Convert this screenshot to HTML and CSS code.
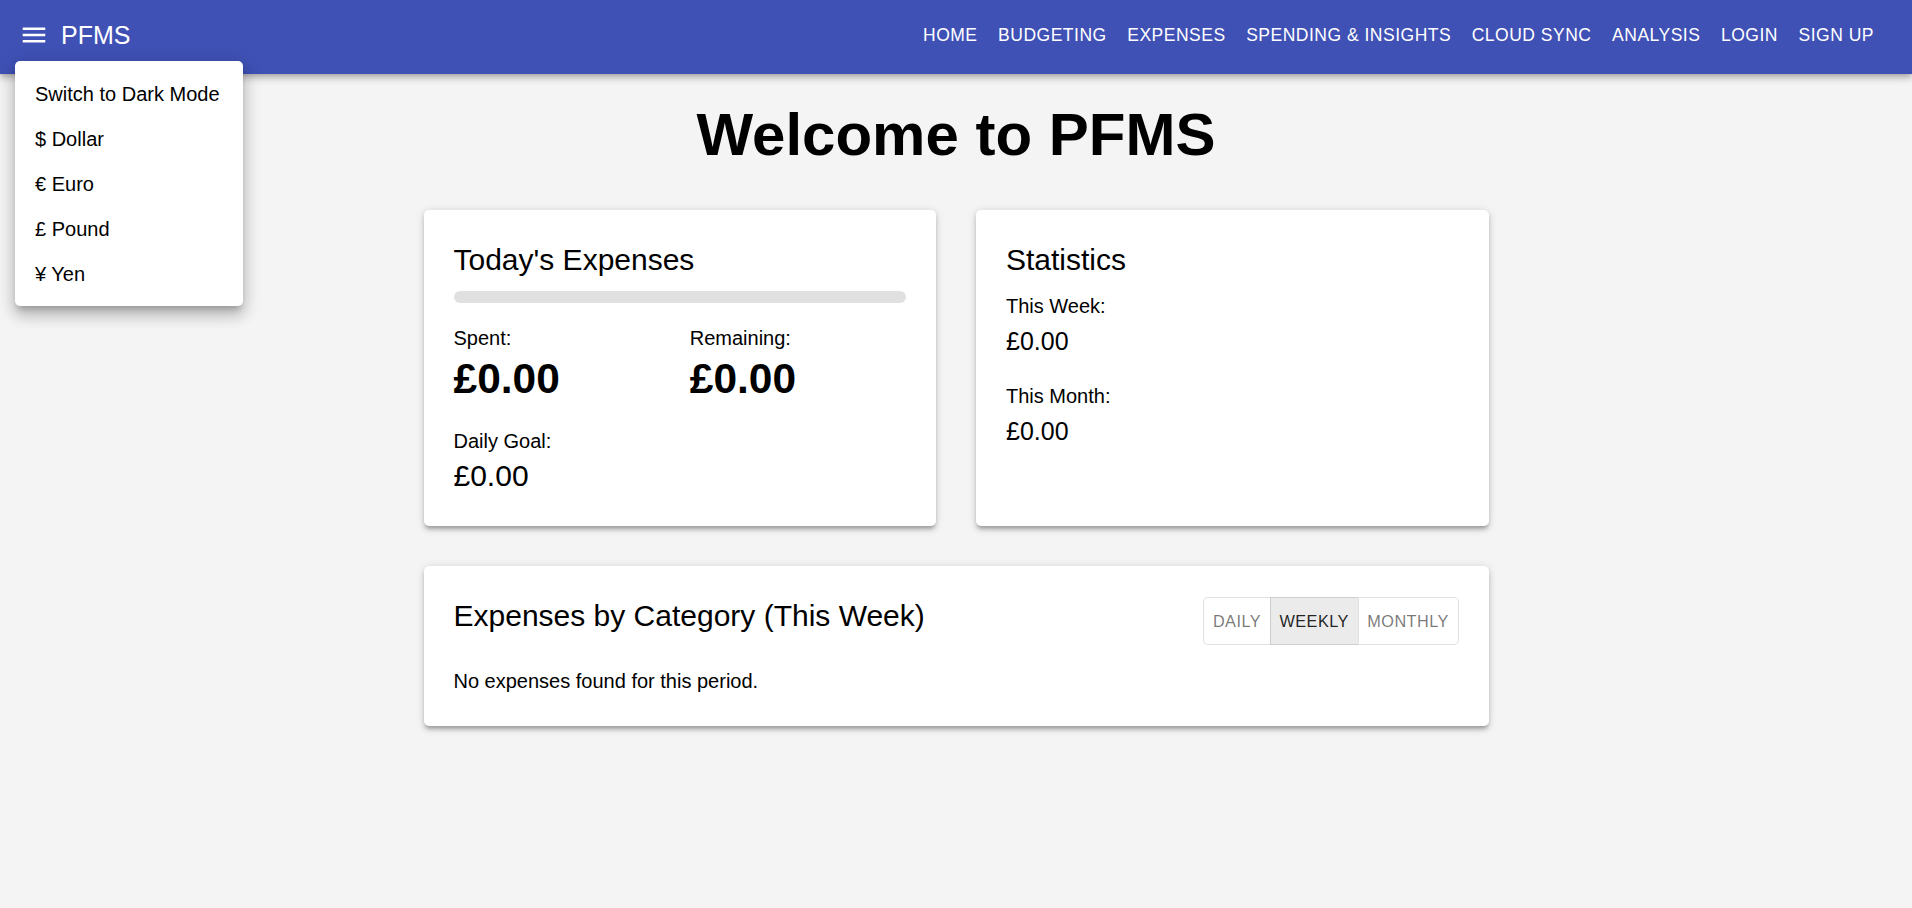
FILE: index.html
```html
<!DOCTYPE html>
<html lang="en">
<head>
<meta charset="utf-8">
<title>PFMS</title>
<link rel="stylesheet" href="styles.css">
</head>
<body>
<header class="appbar">
  <button class="menu-btn" aria-label="menu">
    <svg viewBox="0 0 24 24" width="30" height="30"><path fill="#fff" d="M3 18h18v-2H3v2zm0-5h18v-2H3v2zm0-7v2h18V6H3z"/></svg>
  </button>
  <div class="brand">PFMS</div>
  <nav class="nav">
    <a class="nav-btn">Home</a>
    <a class="nav-btn">Budgeting</a>
    <a class="nav-btn">Expenses</a>
    <a class="nav-btn">Spending &amp; Insights</a>
    <a class="nav-btn">Cloud Sync</a>
    <a class="nav-btn">Analysis</a>
    <a class="nav-btn">Login</a>
    <a class="nav-btn">Sign Up</a>
  </nav>
</header>

<ul class="dropdown">
  <li class="dropdown-item">Switch to Dark Mode</li>
  <li class="dropdown-item">$ Dollar</li>
  <li class="dropdown-item">€ Euro</li>
  <li class="dropdown-item">£ Pound</li>
  <li class="dropdown-item">¥ Yen</li>
</ul>

<main class="container">
  <h1 class="page-title">Welcome to PFMS</h1>
  <div class="cards-row">
    <section class="card">
      <h2 class="card-title">Today's Expenses</h2>
      <div class="progress"></div>
      <div class="today-grid">
        <div>
          <div class="label">Spent:</div>
          <div class="big-value">£0.00</div>
        </div>
        <div>
          <div class="label">Remaining:</div>
          <div class="big-value">£0.00</div>
        </div>
        <div>
          <div class="label">Daily Goal:</div>
          <div class="mid-value">£0.00</div>
        </div>
      </div>
    </section>
    <section class="card">
      <h2 class="card-title">Statistics</h2>
      <div class="stat">
        <div class="label">This Week:</div>
        <div class="stat-value">£0.00</div>
      </div>
      <div class="stat">
        <div class="label">This Month:</div>
        <div class="stat-value">£0.00</div>
      </div>
    </section>
  </div>
  <section class="card category-card">
    <div class="category-head">
      <h2 class="card-title">Expenses by Category (This Week)</h2>
      <div class="toggle-group">
        <button class="toggle">Daily</button>
        <button class="toggle selected">Weekly</button>
        <button class="toggle">Monthly</button>
      </div>
    </div>
    <p class="empty">No expenses found for this period.</p>
  </section>
</main>
</body>
</html>
```

FILE: styles.css
```css
* { box-sizing: border-box; }

html, body {
  margin: 0;
  padding: 0;
}

body {
  background: #f4f4f4;
  font-family: "Liberation Sans", Arial, sans-serif;
  color: #000;
  min-height: 908px;
}

.appbar {
  height: 74px;
  background: #3f51b5;
  color: #fff;
  display: flex;
  align-items: center;
  padding: 0 28px 4px 19px;
  box-shadow: 0 2.5px 5px -1.25px rgba(0,0,0,0.2), 0 5px 6px 0 rgba(0,0,0,0.14), 0 1.25px 12px 0 rgba(0,0,0,0.12);
  position: relative;
  z-index: 2;
}

.menu-btn {
  background: none;
  border: 0;
  padding: 0;
  width: 30px;
  height: 30px;
  display: flex;
  cursor: pointer;
}

.brand {
  margin-left: 12px;
  font-size: 25px;
  line-height: 40px;
  font-weight: 400;
}

.nav {
  margin-left: auto;
  display: flex;
  gap: 0.6px;
}

.nav-btn {
  font-size: 17.5px;
  line-height: 30px;
  padding: 0 10px;
  text-transform: uppercase;
  letter-spacing: 0.5px;
  color: #fff;
  cursor: pointer;
}

.dropdown {
  position: absolute;
  left: 15px;
  top: 61px;
  width: 228px;
  margin: 0;
  padding: 10px 0;
  list-style: none;
  background: #fff;
  border-radius: 5px;
  z-index: 5;
  box-shadow: 0 6px 6px -3px rgba(0,0,0,0.2), 0 10px 14px 1px rgba(0,0,0,0.14), 0 4px 18px 3px rgba(0,0,0,0.12);
}

.dropdown-item {
  font-size: 20px;
  line-height: 30px;
  padding: 7.5px 20px;
  white-space: nowrap;
}

.container {
  width: 1065px;
  margin: 0 auto;
}

.page-title {
  margin: 26px 0 40px;
  text-align: center;
  font-size: 60px;
  line-height: 70px;
  font-weight: 700;
}

.cards-row {
  display: grid;
  grid-template-columns: 1fr 1fr;
  gap: 40px;
  margin-bottom: 40px;
}

.card {
  background: #fff;
  border-radius: 5px;
  padding: 30px;
  box-shadow: 0 3.75px 3.75px -2.5px rgba(0,0,0,0.2), 0 3.75px 5px 0 rgba(0,0,0,0.14), 0 1.25px 10px 0 rgba(0,0,0,0.12);
}

.card-title {
  margin: 0 0 10.5px;
  font-size: 30px;
  line-height: 40px;
  font-weight: 400;
}

.progress {
  height: 12.5px;
  border-radius: 7px;
  background: #e0e0e0;
  margin-bottom: 20px;
}

.today-grid {
  display: grid;
  grid-template-columns: 1fr 1fr;
  column-gap: 20px;
  row-gap: 20px;
}

.label {
  font-size: 20px;
  line-height: 30px;
}

.big-value {
  font-size: 42.5px;
  line-height: 52.5px;
  font-weight: 700;
}

.mid-value {
  font-size: 30px;
  line-height: 40px;
}

.stat {
  margin-bottom: 20px;
}

.stat-value {
  font-size: 25px;
  line-height: 40px;
}

.category-head {
  display: flex;
  justify-content: space-between;
  align-items: center;
  margin-bottom: 20px;
}

.toggle-group {
  display: flex;
}

.toggle {
  font-family: "Liberation Sans", Arial, sans-serif;
  font-size: 16.25px;
  line-height: 28.5px;
  letter-spacing: 0.46px;
  text-transform: uppercase;
  padding: 8.75px;
  background: #fff;
  color: rgba(0,0,0,0.54);
  border: 1px solid rgba(0,0,0,0.12);
  border-radius: 0;
  margin: 0;
  cursor: pointer;
}

.toggle + .toggle {
  margin-left: -1px;
}

.toggle:first-child {
  border-radius: 5px 0 0 5px;
}

.toggle:last-child {
  border-radius: 0 5px 5px 0;
}

.toggle.selected {
  background: #ebebeb;
  color: rgba(0,0,0,0.87);
}

.empty {
  margin: 0;
  font-size: 20px;
  line-height: 30px;
}
```
